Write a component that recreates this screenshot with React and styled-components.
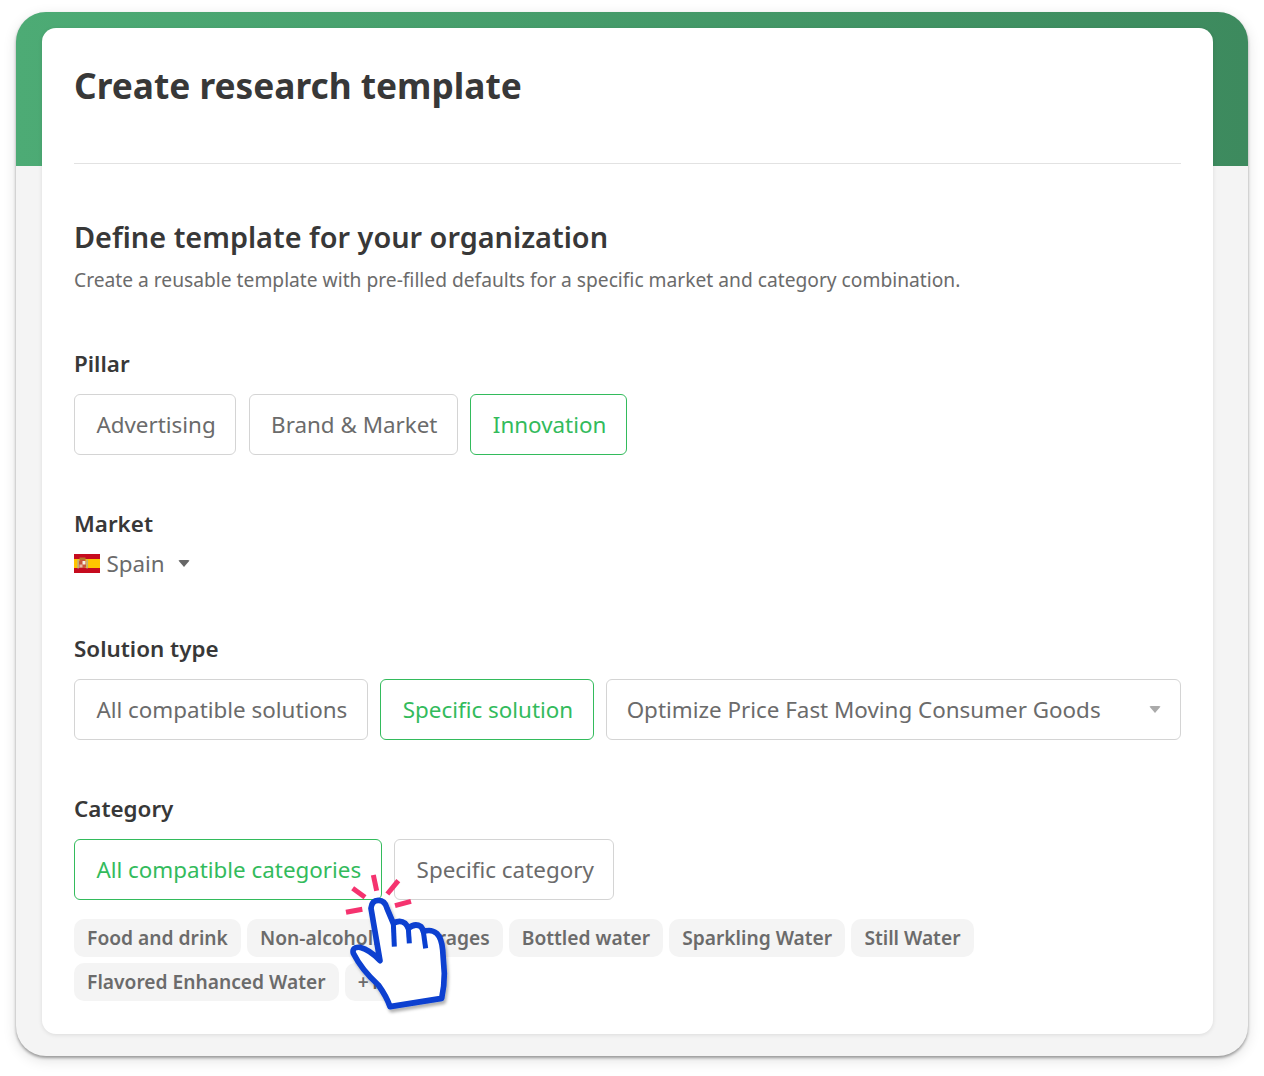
import React from "react";
import styled, { createGlobalStyle } from "styled-components";

const Global = createGlobalStyle`
  html, body { margin: 0; padding: 0; background: #fff; }
  body { font-family: "Noto Sans", "Open Sans", sans-serif; color: #333; }
`;
const Page = styled.div`
  position: relative;
  width: 1264px;
  height: 1076px;
  padding: 12px 16px 20px;
  box-sizing: border-box;
  overflow: hidden;
`;
const Frame = styled.div`
  height: 1044px;
  box-sizing: border-box;
  padding: 16px 35px 22px 26px;
  border-radius: 30px;
  background: linear-gradient(90deg, #4dab75, #3d8a5e) top / 100% 154px no-repeat, #f4f4f4;
  box-shadow: 0 2px 3px rgba(0,0,0,.35), 0 4px 14px rgba(0,0,0,.12);
`;
const Card = styled.div`
  height: 1006px;
  box-sizing: border-box;
  padding: 0 32px;
  background: #fff;
  border-radius: 14px;
  box-shadow: 0 1px 4px rgba(0,0,0,.1);
`;
const Header = styled.header`
  height: 136px;
  box-sizing: border-box;
  padding-top: 35px;
  border-bottom: 1px solid #e2e2e2;
`;
const Title = styled.h1`
  margin: 0;
  font-size: 35.28px;
  line-height: 44px;
  font-weight: 700;
  color: #383838;
`;
const Heading = styled.h2`
  margin: 55px 0 0;
  font-size: 28.85px;
  line-height: 36px;
  font-weight: 600;
  color: #383838;
`;
const Description = styled.p`
  margin: 11px 0 0;
  font-size: 19.22px;
  line-height: 28px;
  color: #6b6b6b;
`;
const Section = styled.section`
  margin-top: ${p => p.$top}px;
`;
const Label = styled.div`
  font-size: 22.4px;
  line-height: 28px;
  font-weight: 600;
  color: #383838;
`;
const Options = styled.div`
  display: flex;
  gap: 12.4px;
  margin-top: 16px;
`;
const Option = styled.div`
  height: 61px;
  box-sizing: border-box;
  display: flex;
  align-items: center;
  padding: 0 19.6px 0 21.4px;
  border: 1px solid ${p => (p.$active ? "#33bb5c" : "#d4d4d4")};
  border-radius: 6px;
  font-size: 22.4px;
  color: ${p => (p.$active ? "#33bb5c" : "#6b6b6b")};
  white-space: nowrap;
`;
const SelectBox = styled(Option)`
  flex: 1;
  min-width: 0;
  justify-content: space-between;
  padding: 0 19px 0 19.5px;
`;
const Caret = styled.span`
  display: inline-block;
  width: 0;
  height: 0;
  border-left: 6.5px solid transparent;
  border-right: 6.5px solid transparent;
  border-top: 7px solid ${p => p.$color || "#666"};
  border-radius: 2px;
`;
const MarketRow = styled.div`
  display: flex;
  align-items: center;
  margin-top: 11px;
  height: 28px;
  font-size: 22.4px;
  color: #6b6b6b;
`;
const MarketName = styled.span`
  margin: 0 13px 0 6.4px;
`;
const Chips = styled.div`
  display: flex;
  flex-wrap: wrap;
  gap: 6px;
  margin-top: 19px;
  width: 920px;
`;
const Chip = styled.span`
  height: 38px;
  box-sizing: border-box;
  padding: 0 13.1px 2px;
  display: inline-flex;
  align-items: center;
  border-radius: 10px;
  background: #f4f4f4;
  color: #6b6b6b;
  font-size: 19.2px;
  font-weight: 600;
  white-space: nowrap;
`;
const HandLayer = styled.svg`
  position: absolute;
  left: 345px;
  top: 890px;
  width: 105px;
  height: 125px;
  overflow: visible;
`;

const Flag = () => (
  <svg width="26" height="19" viewBox="0 0 26 19">
    <rect width="26" height="19" fill="#c60b1e" />
    <rect y="5" width="26" height="9" fill="#ffc400" />
    <rect x="5.5" y="3.5" width="6" height="2.5" fill="#b5762a" />
    <rect x="5" y="6" width="7" height="8" rx="1.5" fill="#c8553a" />
    <rect x="8.5" y="7" width="3" height="3.5" fill="#f3efe0" />
    <rect x="5.5" y="10.5" width="3" height="3" fill="#e8b8a0" />
    <rect x="3.5" y="5.5" width="1.2" height="9" fill="#a9a9a9" />
    <rect x="12.5" y="5.5" width="1.2" height="9" fill="#a9a9a9" />
  </svg>
);

const handPath = "M78 55 Q80 31 100 31 Q120 31 126 55 L145 100 Q165 88 180 100 Q186 106 190 115 Q210 98 228 110 Q233 116 235 125 Q258 116 275 130 Q290 145 293 180 L298 250 Q298 290 290 325 L135 350 Q125 320 100 285 Q50 240 25 190 Q20 170 45 172 Q75 180 105 212 Z";

const Hand = () => (
  <HandLayer viewBox="0 0 315 375" aria-hidden="true">
    <defs>
      <filter id="handShadow" x="-20%" y="-20%" width="140%" height="140%">
        <feDropShadow dx="5" dy="9" stdDeviation="5" floodColor="#000" floodOpacity=".3" />
      </filter>
    </defs>
    <g stroke="#f5336f" strokeWidth="15" fill="none">
      <path d="M23 -5 L60 22" />
      <path d="M85 -45 L95 2" />
      <path d="M160 -28 L127 12" />
      <path d="M3 67 L52 58" />
      <path d="M150 47 L198 34" />
    </g>
    <g filter="url(#handShadow)">
      <path d={handPath} fill="#fff" stroke="#0a3fd0" strokeWidth="17" strokeLinejoin="round" />
    </g>
    <g stroke="#0a3fd0" strokeWidth="15" fill="none">
      <path d="M145 100 L148 170" />
      <path d="M190 115 L193 160" />
      <path d="M235 125 L242 175" />
    </g>
  </HandLayer>
);

export default function App() {
  return (
    <Page>
      <Global />
      <Frame>
        <Card>
          <Header>
            <Title>Create research template</Title>
          </Header>
          <Heading>Define template for your organization</Heading>
          <Description>Create a reusable template with pre-filled defaults for a specific market and category combination.</Description>
          <Section $top={56}>
            <Label>Pillar</Label>
            <Options>
              <Option>Advertising</Option>
              <Option>Brand &amp; Market</Option>
              <Option $active>Innovation</Option>
            </Options>
          </Section>
          <Section $top={55}>
            <Label>Market</Label>
            <MarketRow>
              <Flag />
              <MarketName>Spain</MarketName>
              <Caret />
            </MarketRow>
          </Section>
          <Section $top={58}>
            <Label>Solution type</Label>
            <Options>
              <Option>All compatible solutions</Option>
              <Option $active>Specific solution</Option>
              <SelectBox>
                Optimize Price Fast Moving Consumer Goods
                <Caret $color="#aaa" />
              </SelectBox>
            </Options>
          </Section>
          <Section $top={55}>
            <Label>Category</Label>
            <Options>
              <Option $active>All compatible categories</Option>
              <Option>Specific category</Option>
            </Options>
            <Chips>
              <Chip>Food and drink</Chip>
              <Chip>Non-alcoholic beverages</Chip>
              <Chip>Bottled water</Chip>
              <Chip>Sparkling Water</Chip>
              <Chip>Still Water</Chip>
              <Chip>Flavored Enhanced Water</Chip>
              <Chip>+1</Chip>
            </Chips>
          </Section>
        </Card>
      </Frame>
      <Hand />
    </Page>
  );
}
